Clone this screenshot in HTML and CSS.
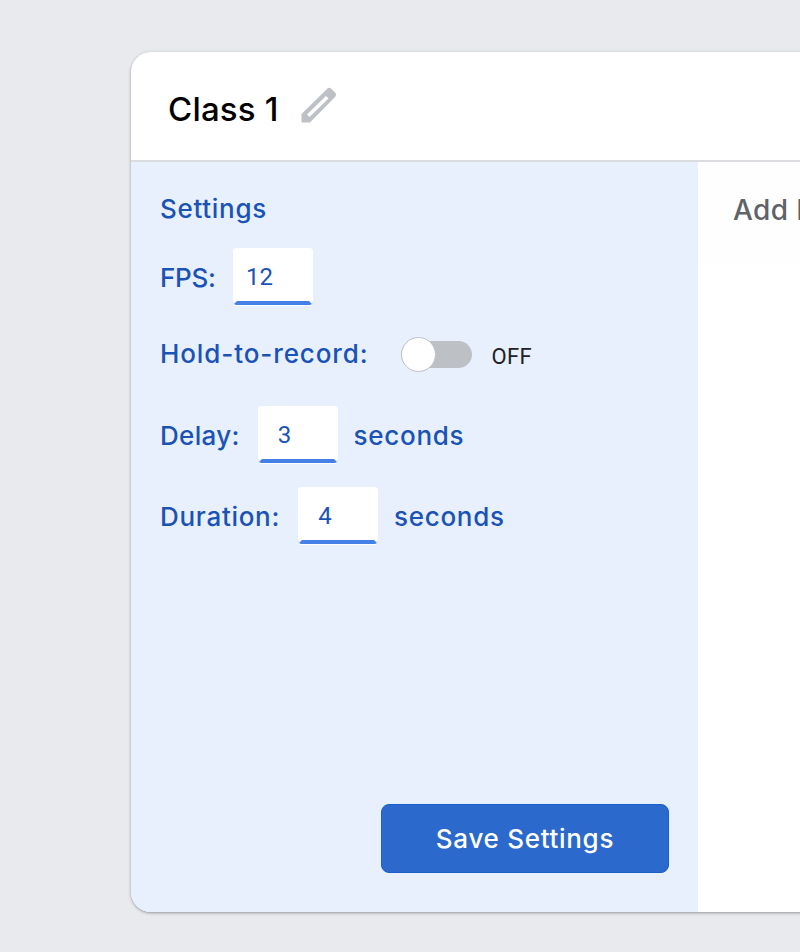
FILE: index.html
```html
<!DOCTYPE html>
<html lang="en">
<head>
    <meta charset="UTF-8">
    <meta name="viewport" content="width=device-width, initial-scale=1.0">
    <title>Class 1</title>
    <link rel="stylesheet" href="styles.css">
</head>
<body>
    <div class="card">
        <div class="card-header">
            <h2 class="class-name">Class 1</h2>
            <svg class="edit-icon" width="36" height="36" viewBox="0 0 36 36">
                <path d="M0.500 35.500V27L26 2Q28 0 30 1.500L34.500 6Q36 8 34 10L9 35.500ZM6 27.500L8.500 30L27.500 11.500L25 9Z" fill="#bdc1c6" fill-rule="evenodd"/>
            </svg>
        </div>
        <div class="card-body">
            <div class="settings">
                <div class="settings-title">Settings</div>
                <div class="row row-fps">
                    <label class="field-label">FPS:</label>
                    <input class="num-input" type="text" value="12">
                </div>
                <div class="row row-hold">
                    <label class="field-label">Hold-to-record:</label>
                    <span class="toggle"><span class="toggle-knob"></span></span>
                    <span class="toggle-text">OFF</span>
                </div>
                <div class="row row-delay">
                    <label class="field-label">Delay:</label>
                    <input class="num-input" type="text" value="3">
                    <span class="field-label">seconds</span>
                </div>
                <div class="row row-duration">
                    <label class="field-label">Duration:</label>
                    <input class="num-input" type="text" value="4">
                    <span class="field-label">seconds</span>
                </div>
                <div class="settings-footer">
                    <button type="button" class="btn-save">Save Settings</button>
                </div>
            </div>
            <div class="samples">
                <div class="samples-top">Add Image Samples:</div>
            </div>
        </div>
    </div>
</body>
</html>
```

FILE: styles.css
```css
html, body {
    height: 100%;
}
body {
    margin: 0;
    padding: 52px 0 0 131px;
    box-sizing: border-box;
    overflow: hidden;
    background-color: #e8eaed;
    font-family: Inter, "Noto Sans", sans-serif;
}
.card {
    width: 1000px;
    height: 860px;
    display: flex;
    flex-direction: column;
    background-color: #fff;
    border-radius: 20px;
    overflow: hidden;
    box-shadow: 0 1px 2px rgba(60, 64, 67, 0.3), 0 1px 3px 1px rgba(60, 64, 67, 0.15);
}
.card-header {
    height: 108px;
    flex: none;
    display: flex;
    align-items: center;
    padding-left: 37px;
    border-bottom: 2px solid #dadce0;
}
.class-name {
    margin: 6px 0 0 0;
    font-size: 33px;
    font-weight: 500;
    letter-spacing: 0.2px;
    color: #000;
}
.edit-icon {
    margin-left: 22px;
    margin-top: -2px;
}
.card-body {
    flex: 1;
    display: flex;
    min-height: 0;
}
.settings {
    width: 567px;
    flex: none;
    box-sizing: border-box;
    padding: 31px 29px 39px 29px;
    display: flex;
    flex-direction: column;
    background-color: #e8f0fe;
    color: #1a53b5;
}
.settings-title {
    font-size: 26px;
    font-weight: 500;
    letter-spacing: 0.7px;
    line-height: 32px;
}
.row {
    display: flex;
    align-items: center;
}
.row-fps {
    margin-top: 23px;
}
.row-fps .field-label {
    letter-spacing: -0.3px;
}
.row-hold {
    margin-top: 32px;
}
.row-hold .field-label {
    letter-spacing: 0.9px;
}
.row-delay {
    margin-top: 37px;
}
.row-delay .field-label:first-child {
    letter-spacing: 0.3px;
}
.row-delay .num-input {
    margin-left: 18px;
}
.row-duration {
    margin-top: 23px;
}
.row-duration .num-input {
    margin-left: 18px;
}
.field-label {
    font-size: 26px;
    font-weight: 500;
    letter-spacing: 0.7px;
}
.num-input {
    width: 80px;
    height: 57px;
    box-sizing: border-box;
    margin: 0 16px 1px 17px;
    padding: 4px 26px 0 0;
    border: none;
    border-radius: 4px;
    border-left: 4px solid #fff;
    border-right: 4px solid #fff;
    border-bottom: 4px solid #4480e6;
    outline: none;
    background-color: #fff;
    color: #1a53b5;
    font-family: Roboto, sans-serif;
    font-size: 24px;
    text-align: center;
    box-shadow: 0 1px 0 #fff;
}
.toggle {
    position: relative;
    width: 71px;
    height: 27px;
    margin-left: 32px;
    margin-top: 2px;
    border-radius: 14px;
    background-color: #bdc1c6;
}
.toggle-knob {
    position: absolute;
    left: 0;
    top: -4px;
    width: 35px;
    height: 35px;
    box-sizing: border-box;
    border: 1px solid #bdc1c6;
    border-radius: 50%;
    background-color: #fff;
}
.toggle-text {
    margin-left: 20px;
    margin-top: 5px;
    font-family: Roboto, sans-serif;
    font-size: 22px;
    letter-spacing: 0.3px;
    color: #202124;
}
.settings-footer {
    margin-top: auto;
    display: flex;
    justify-content: flex-end;
}
.btn-save {
    width: 288px;
    height: 69px;
    border: 1px solid #1a5fc8;
    border-radius: 8px;
    background-color: #2b69cc;
    color: #fff;
    font-family: Inter, "Noto Sans", sans-serif;
    font-size: 26px;
    font-weight: 500;
    letter-spacing: 0.7px;
}
.samples {
    flex: 1;
}
.samples-top {
    height: 101px;
    box-sizing: border-box;
    padding: 31px 0 0 35px;
    background-color: #fefefe;
    color: #5f6368;
    font-size: 28px;
    font-weight: 500;
    letter-spacing: 0.4px;
    white-space: nowrap;
}
```
